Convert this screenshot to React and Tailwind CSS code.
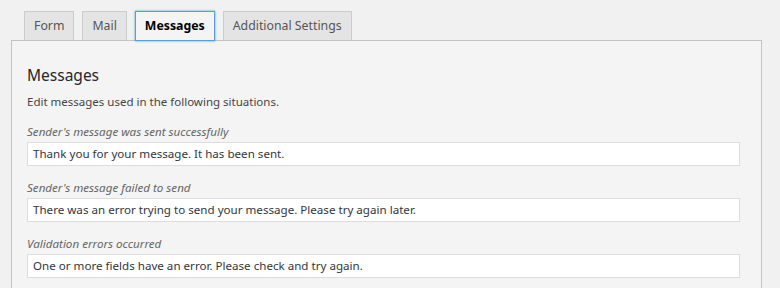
import React from "react"

const tabs = ["Form", "Mail", "Messages", "Additional Settings"]

const fields = [
  {
    label: "Sender's message was sent successfully",
    value: "Thank you for your message. It has been sent.",
  },
  {
    label: "Sender's message failed to send",
    value: "There was an error trying to send your message. Please try again later.",
  },
  {
    label: "Validation errors occurred",
    value: "One or more fields have an error. Please check and try again.",
  },
]

export default function App() {
  return (
    <div
      className="w-[780px] h-[288px] overflow-hidden bg-[#f1f1f1] pl-[11px] pr-[18px] pt-[11px]"
      style={{ fontFamily: '"Noto Sans", "Open Sans", sans-serif' }}
    >
      {/* tab strip */}
      <div className="flex gap-2 pl-[13px] relative z-10">
        {tabs.map((t) => {
          const active = t === "Messages"
          return (
            <div
              key={t}
              className={
                active
                  ? "h-[30px] -mb-px px-[9px] flex items-center border border-[#5b9dd9] bg-[#f4f4f4] text-[12.3px] font-bold text-black shadow-[0_0_2px_rgba(30,140,190,0.8)]"
                  : "h-[29px] px-[9px] flex items-center border border-[#cccccc] border-b-0 bg-[#e4e4e4] text-[12.3px] text-[#555]"
              }
            >
              {t}
            </div>
          )
        })}
      </div>

      {/* panel */}
      <div className="border border-[#c3c3c3] bg-[#f4f4f4] h-[260px] pl-[15px] pr-[21px] pt-[23px]">
        <h2 className="text-[15.5px] leading-[22px] text-[#23282d]">Messages</h2>
        <p className="mt-[8px] text-[11.5px] leading-[16px] text-[#444]">
          Edit messages used in the following situations.
        </p>
        <div className="mt-[14px] flex flex-col gap-[14px]">
          {fields.map((f) => (
            <div key={f.label}>
              <div className="text-[11.6px] leading-[16px] italic text-[#666]">{f.label}</div>
              <div className="mt-[2px] h-[24px] border border-[#dddddd] bg-white px-[5px] flex items-center text-[11.6px] text-[#32373c]">
                {f.value}
              </div>
            </div>
          ))}
        </div>
      </div>
    </div>
  )
}
